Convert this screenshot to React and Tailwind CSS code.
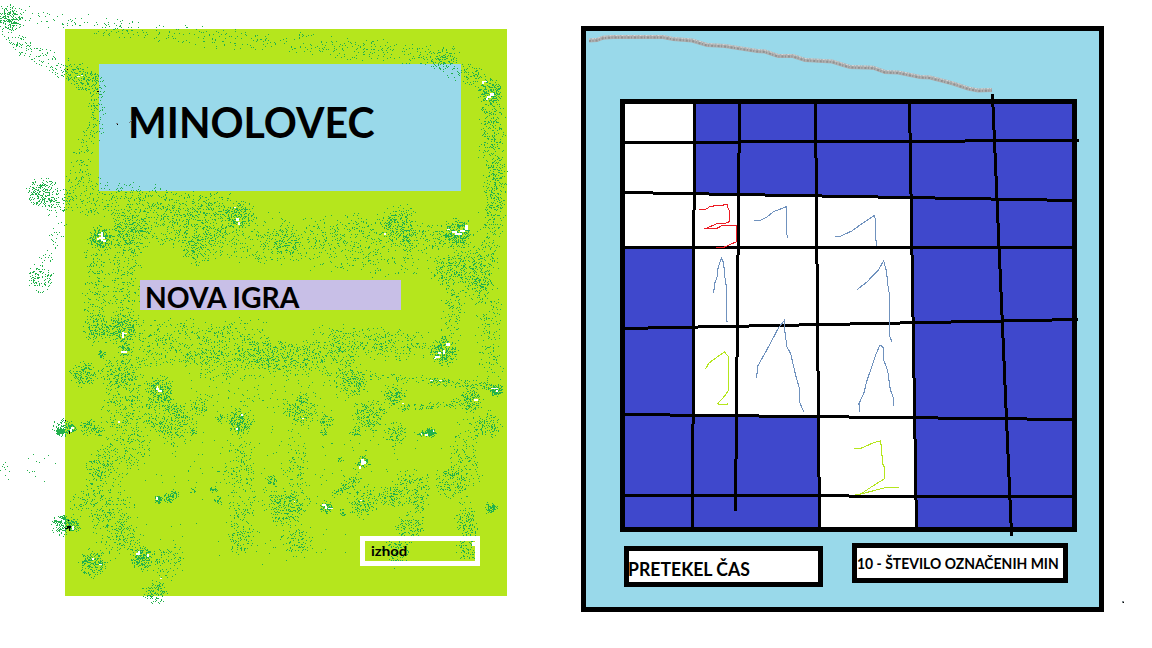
import React from "react";

// Spray strokes: [x1, y1, x2, y2, radius, particles]
const SPRAY = [
  [10, 18, 10, 18, 13, 210], [8, 35, 28, 50, 8, 70], [20, 14, 120, 28, 9, 80],
  [30, 50, 66, 70, 9, 80], [72, 72, 95, 86, 10, 200], [96, 85, 98, 130, 9, 80],
  [92, 125, 75, 190, 10, 100], [42, 193, 42, 193, 15, 240], [50, 205, 66, 200, 10, 60],
  [60, 225, 44, 262, 8, 40], [41, 278, 41, 278, 14, 110], [110, 28, 290, 45, 10, 170],
  [290, 42, 400, 52, 10, 160], [400, 52, 445, 60, 10, 80], [445, 58, 445, 58, 13, 80],
  [445, 65, 485, 80, 10, 100], [490, 92, 490, 92, 12, 200], [492, 105, 492, 160, 11, 210],
  [495, 160, 495, 215, 10, 240], [493, 215, 480, 290, 12, 200], [488, 290, 490, 380, 12, 160],
  [70, 195, 240, 215, 18, 620], [240, 215, 240, 215, 14, 150], [100, 238, 100, 238, 12, 200],
  [130, 232, 130, 232, 22, 300], [150, 225, 230, 225, 20, 400], [196, 250, 196, 250, 15, 120],
  [200, 240, 280, 250, 14, 180], [285, 242, 285, 242, 17, 150], [310, 235, 400, 228, 16, 270],
  [250, 225, 310, 235, 14, 60], [400, 222, 400, 222, 18, 190], [400, 240, 450, 235, 12, 190],
  [458, 232, 458, 232, 14, 280], [300, 250, 420, 260, 17, 230], [448, 270, 448, 270, 17, 180],
  [465, 250, 480, 290, 14, 220], [455, 285, 450, 335, 10, 110], [95, 240, 95, 330, 12, 210],
  [125, 240, 125, 330, 14, 240], [97, 330, 97, 330, 14, 130], [122, 330, 122, 330, 16, 220],
  [102, 354, 102, 354, 4, 40], [125, 350, 125, 350, 7, 70], [110, 372, 135, 372, 14, 190],
  [83, 373, 83, 373, 13, 150], [135, 335, 260, 335, 14, 330], [140, 355, 260, 355, 9, 270],
  [200, 365, 250, 370, 12, 90], [250, 355, 320, 358, 15, 460], [320, 340, 420, 345, 14, 360],
  [443, 351, 443, 351, 13, 290], [335, 350, 350, 375, 12, 90], [320, 372, 430, 380, 4, 90],
  [430, 380, 500, 388, 4, 140], [496, 390, 496, 390, 6, 100], [160, 390, 160, 390, 15, 190],
  [150, 405, 180, 430, 17, 300], [352, 385, 352, 385, 15, 130], [393, 395, 393, 395, 12, 110],
  [368, 415, 368, 415, 17, 180], [400, 408, 460, 403, 4, 90], [470, 400, 470, 400, 12, 140],
  [300, 410, 300, 410, 16, 160], [240, 422, 240, 422, 13, 200], [240, 440, 240, 540, 13, 220],
  [240, 540, 240, 540, 13, 70], [120, 380, 120, 430, 17, 230], [62, 427, 62, 427, 10, 90],
  [60, 431, 60, 431, 4, 110], [71, 428, 71, 428, 5, 70], [88, 427, 88, 427, 8, 60],
  [98, 430, 98, 430, 6, 35], [180, 420, 180, 420, 18, 80], [198, 407, 198, 407, 10, 45],
  [140, 430, 110, 470, 18, 190], [100, 465, 100, 465, 14, 110], [100, 480, 72, 508, 9, 90],
  [62, 524, 62, 524, 11, 160], [73, 526, 73, 526, 7, 80], [110, 490, 110, 540, 19, 250],
  [92, 563, 92, 563, 13, 190], [125, 538, 125, 538, 15, 80], [142, 558, 142, 558, 12, 210],
  [168, 560, 168, 560, 18, 90], [155, 592, 155, 592, 12, 120], [158, 499, 158, 499, 4, 90],
  [168, 498, 168, 498, 5, 40], [174, 494, 174, 494, 5, 30], [213, 488, 213, 488, 4, 25],
  [217, 501, 217, 501, 5, 22], [192, 490, 192, 490, 4, 10], [219, 419, 219, 419, 5, 20],
  [194, 432, 194, 432, 4, 14], [272, 480, 272, 480, 6, 40], [285, 507, 285, 507, 18, 200],
  [297, 540, 297, 540, 16, 100], [295, 440, 295, 490, 12, 90], [326, 507, 326, 507, 6, 90],
  [363, 462, 363, 462, 6, 60], [357, 478, 335, 495, 5, 80], [362, 502, 362, 502, 15, 140],
  [385, 497, 395, 497, 9, 80], [410, 492, 415, 487, 17, 170], [450, 482, 450, 482, 16, 130],
  [410, 527, 410, 527, 15, 120], [430, 432, 430, 432, 5, 100], [420, 433, 432, 432, 4, 50],
  [487, 425, 487, 425, 14, 120], [465, 430, 465, 490, 14, 160], [490, 508, 490, 508, 6, 80],
  [465, 510, 468, 555, 10, 210], [396, 552, 396, 552, 14, 110], [396, 440, 396, 430, 10, 80],
  [325, 420, 325, 420, 8, 50], [323, 432, 323, 432, 4, 18], [356, 432, 356, 432, 5, 30],
  [245, 512, 245, 512, 4, 12], [260, 500, 310, 506, 10, 60], [342, 512, 342, 512, 4, 20],
  [420, 509, 420, 509, 4, 12], [340, 460, 340, 460, 4, 12], [140, 460, 420, 460, 34, 170],
  [110, 540, 340, 540, 20, 60], [190, 395, 340, 390, 20, 130],
  [3, 470, 3, 470, 9, 14], [40, 465, 40, 465, 18, 13],
];

function sprayPath() {
  let seed = 90217;
  const rnd = () => {
    seed = (Math.imul(seed, 1664525) + 1013904223) >>> 0;
    return seed / 4294967296;
  };
  let d = "";
  for (const [x1, y1, x2, y2, r, n] of SPRAY) {
    const isStroke = x1 !== x2 || y1 !== y2;
    const base = isStroke ? 0.85 : 0.6;
    const spread = isStroke ? 0.5 : 0.6;
    for (let i = 0; i < n; i++) {
      const t = rnd();
      const a = rnd() * Math.PI * 2;
      const q = Math.sqrt(rnd()) * r * (base + spread * rnd());
      const x = Math.round(x1 + (x2 - x1) * t + Math.cos(a) * q);
      const y = Math.round(y1 + (y2 - y1) * t + Math.sin(a) * q);
      d += `M${x} ${y}h1v1h-1z`;
    }
  }
  return d;
}
const GREEN = sprayPath();

// Clusters of single-pixel highlights
const WHITE =
  "M98 234h4v1h-4zM99 237h6v2h-6zM101 232h2v9h-2zM97 238h2v2h-2zM103 240h3v2h-3zM122 332h2v6h-2zM124 333h3v1h-3zM121 351h6v2h-6zM236 218h3v3h-3zM238 222h2v3h-2zM156 388h3v2h-3zM158 390h4v2h-4zM157 386h1v2h-1zM234 207h2v1h-2zM482 81h5v1h-5zM482 82h2v2h-2zM490 93h4v3h-4zM487 96h4v2h-4zM486 98h2v2h-2zM447 229h3v1h-3zM452 231h5v2h-5zM455 233h7v2h-7zM465 225h3v5h-3zM460 230h5v2h-5zM446 343h4v3h-4zM443 350h2v4h-2zM438 352h3v2h-3zM435 356h5v2h-5zM434 358h2v1h-2zM491 388h7v1h-7zM496 390h2v2h-2zM71 427h3v2h-3zM70 429h2v3h-2zM156 497h2v3h-2zM138 551h2v4h-2zM136 553h2v2h-2zM147 554h2v3h-2zM92 558h2v2h-2zM99 564h3v1h-3zM361 459h3v6h-3zM364 461h2v3h-2zM359 466h2v3h-2zM322 504h4v2h-4zM325 506h2v3h-2zM328 508h5v1h-5zM421 433h1v2h-1zM425 434h3v2h-3zM433 430h1v2h-1zM474 399h4v2h-4zM241 414h2v2h-2zM236 428h2v2h-2zM118 421h2v2h-2zM72 526h2v4h-2zM77 76h3v1h-3zM81 75h2v1h-2zM472 542h4v4h-4zM402 403h2v1h-2zM360 500h2v1h-2zM384 233h2v2h-2zM302 418h2v1h-2zM430 380h3v1h-3zM439 380h3v1h-3zM294 501h1v1h-1zM160 578h2v1h-2z";
const BLACK =
  "M67 69h1v1h-1zM97 91h2v1h-2zM65 420h1v1h-1zM69 431h1v3h-1zM68 520h1v1h-1zM65 528h3v1h-3zM67 526h4v2h-4zM69 528h1v3h-1zM117 124h1v1h-1zM1123 602h1v1h-1z";
const SHADE = "M116 123h1v1h-1zM117 123h1v1h-1zM1122 601h1v1h-1zM1123 601h1v1h-1zM1122 602h1v1h-1z";

// Horizontal rules: start x, then [top, end x] for every step
const ROWS = [
  [625, [141, 740], [140, 965], [139, 1079]],
  [625, [191, 653], [192, 709], [193, 765], [194, 822], [195, 878], [196, 935], [197, 991], [198, 1047], [199, 1073]],
  [625, [246, 1073]],
  [625, [327, 648], [326, 698], [325, 749], [324, 799], [323, 850], [322, 900], [321, 951], [320, 1001], [319, 1052], [318, 1078]],
  [625, [413, 670], [414, 759], [415, 849], [416, 938], [417, 1027], [418, 1073]],
  [625, [494, 849], [495, 1073]],
];
// Vertical rules: start y, then [left, end y] for every step
const COLS = [
  [104, [693, 210], [692, 424], [691, 527]],
  [104, [738, 153], [737, 255], [736, 357], [735, 459], [734, 511]],
  [104, [814, 158], [815, 264], [816, 371], [817, 477], [818, 527]],
  [104, [908, 133], [909, 194], [910, 255], [911, 317], [912, 378], [913, 439], [914, 500], [915, 527]],
  [94, [991, 107], [992, 130], [993, 153], [994, 176], [995, 199], [996, 223], [997, 246], [998, 269], [999, 292], [1000, 315], [1001, 338], [1002, 361], [1003, 385], [1004, 408], [1005, 431], [1006, 454], [1007, 477], [1008, 500], [1009, 523], [1010, 536]],
];
function rules() {
  let d = "";
  for (const [start, ...steps] of ROWS) {
    let x = start;
    for (const [y, end] of steps) {
      d += `M${x} ${y}H${end}v3H${x}z`;
      x = end;
    }
  }
  for (const [start, ...steps] of COLS) {
    let y = start;
    for (const [x, end] of steps) {
      d += `M${x} ${y}h3V${end}h-3z`;
      y = end;
    }
  }
  return d;
}
const RULES = rules();

function Overlay({ children }) {
  return (
    <svg
      className="pointer-events-none absolute left-0 top-0"
      width="1152"
      height="648"
      viewBox="0 0 1152 648"
      shapeRendering="crispEdges"
      fill="none"
    >
      {children}
    </svg>
  );
}

function BoardDrawing() {
  return (
    <Overlay>
      <path
        fill="#fff"
        d="M625 104H694V193L709 194L765 195L822 196L878 197L912 198V255L913 317L914 378L915 439L916 500L917 527H819V417L759 416L693 415V247H625z"
      />
      <path fill="#000" d={RULES} />
      <g transform="translate(610.3 190.3) scale(.33333)" strokeWidth="3.2">
        <path
          stroke="#ed1c24"
          d="M265 58H285L300 48L340 44H352V50L358 62V94L340 101H318L290 113L280 115H318L335 106H380V154L365 160L345 170L316 172"
        />
        <g stroke="#7092be">
          <path d="M432 92L448 91L470 80L490 64L529 49V130L533 143" />
          <path d="M673 139L690 138L725 122L755 100L792 76L795 85L797 150L800 166" />
          <path d="M310 307L314 277L322 255L323 235L333 203L340 218L344 262L349 295V392L353 395" />
          <path d="M740 298L770 275L805 238L820 211L829 245L832 280L838 317V437L845 455" />
          <path d="M439 562L442 528L470 478L505 412L523 389L524 425L530 470L541 490L556 555L568 597L569 638L580 664" />
          <path d="M748 664L746 640L762 605L768 577L797 492L809 464L818 470L821 512L832 540L840 598L850 625L851 647" />
        </g>
        <path stroke="#b5e61d" d="M286 536L296 518L342 485L356 500V597L345 615L322 640L330 643H350L353 640" />
      </g>
      <path
        transform="translate(840.3 400.3) scale(.33333)"
        strokeWidth="3.2"
        stroke="#b5e61d"
        d="M42 146L65 143L100 127L121 122L124 150L127 190L134 205L133 235L90 262L60 282L45 284L70 279L135 262H177"
      />
    </Overlay>
  );
}

const PENCIL =
  "M589 40.5L597 40L603 37.7L613 37H663L673 39L692 40.5L707 45L725 46L757 51L765 51.5L778 56L793 56L805 60L832 61.5L840 64L850 67L873 67.7L885 72L898 72.5L920 77L930 77.5L953 83.5L968 88.5L978 90.5L992 90";

export default function App() {
  return (
    <main className="relative flex h-[648px] w-[1152px] items-start overflow-hidden bg-white pl-[65px] text-black">
      <section className="mt-[29px] h-[567px] w-[442px] shrink-0 bg-[#b5e61d] pl-[34px] pt-[35px]">
        <div className="h-[127px] w-[362px] bg-[#99d9ea] pl-[29px] pt-[33px]">
          <h1 className="w-max origin-left scale-x-[0.976] whitespace-nowrap font-['Lato'] text-[42px] font-bold leading-[50px]">MINOLOVEC</h1>
        </div>
        <button className="relative z-10 ml-[41px] mt-[89px] block h-[30px] w-[261px] bg-[#c8bfe7] pl-[5px] text-left">
          <span className="block w-max origin-left scale-x-[1.01] whitespace-nowrap font-['Lato'] text-[28px] font-bold leading-[34px]">NOVA IGRA</span>
        </button>
        <button className="relative z-10 ml-[261px] mt-[226px] block h-[30px] w-[120px] border-5 border-white pl-[6px] text-left">
          <span className="block w-max origin-left scale-x-[1.07] whitespace-nowrap font-['Lato'] text-[14px] font-bold leading-[20px]">izhod</span>
        </button>
      </section>

      <section className="ml-[74px] mt-[26px] flex h-[586px] w-[523px] shrink-0 flex-col border-5 border-black bg-[#99d9ea] pl-[34px] pt-[68px]">
        <div className="h-[433px] w-[457px] shrink-0 border-5 border-black bg-[#3f48cc]" />
        <div className="ml-1 mt-[11px] flex items-start gap-[29px]">
          <div className="mt-[3px] h-[41px] w-[199px] border-5 border-black bg-white">
            <span className="-ml-px block w-max origin-left scale-x-[0.98] whitespace-nowrap pt-[6px] font-['Lato'] text-[18px] font-bold leading-[24px]">PRETEKEL ČAS</span>
          </div>
          <div className="h-10 w-[216px] border-5 border-black bg-white">
            <span className="block w-max origin-left scale-x-[0.931] whitespace-nowrap pt-[5px] font-['Lato'] text-[15px] font-bold leading-[20px]">10 - ŠTEVILO OZNAČENIH MIN</span>
          </div>
        </div>
      </section>

      <BoardDrawing />
      <Overlay>
        <path fill="#22b14c" d={GREEN} />
        <path fill="#fff" d={WHITE} />
        <path fill="#7d868a" d={SHADE} />
        <path fill="#000" d={BLACK} />
        <path stroke="#6f7f86" d="M128.5 123.5L132 120" />
      </Overlay>
      <Overlay>
        <g shapeRendering="auto">
          <path stroke="#aeb0b1" strokeWidth="4" d={PENCIL} />
          <path stroke="#909090" strokeWidth="2" strokeDasharray="2 1.5 1 2" transform="translate(0 .5)" d={PENCIL} />
          <path stroke="#d8d6d5" strokeWidth="1" strokeDasharray="1 2 2 1" transform="translate(0 -1.5)" d={PENCIL} />
        </g>
      </Overlay>
    </main>
  );
}
